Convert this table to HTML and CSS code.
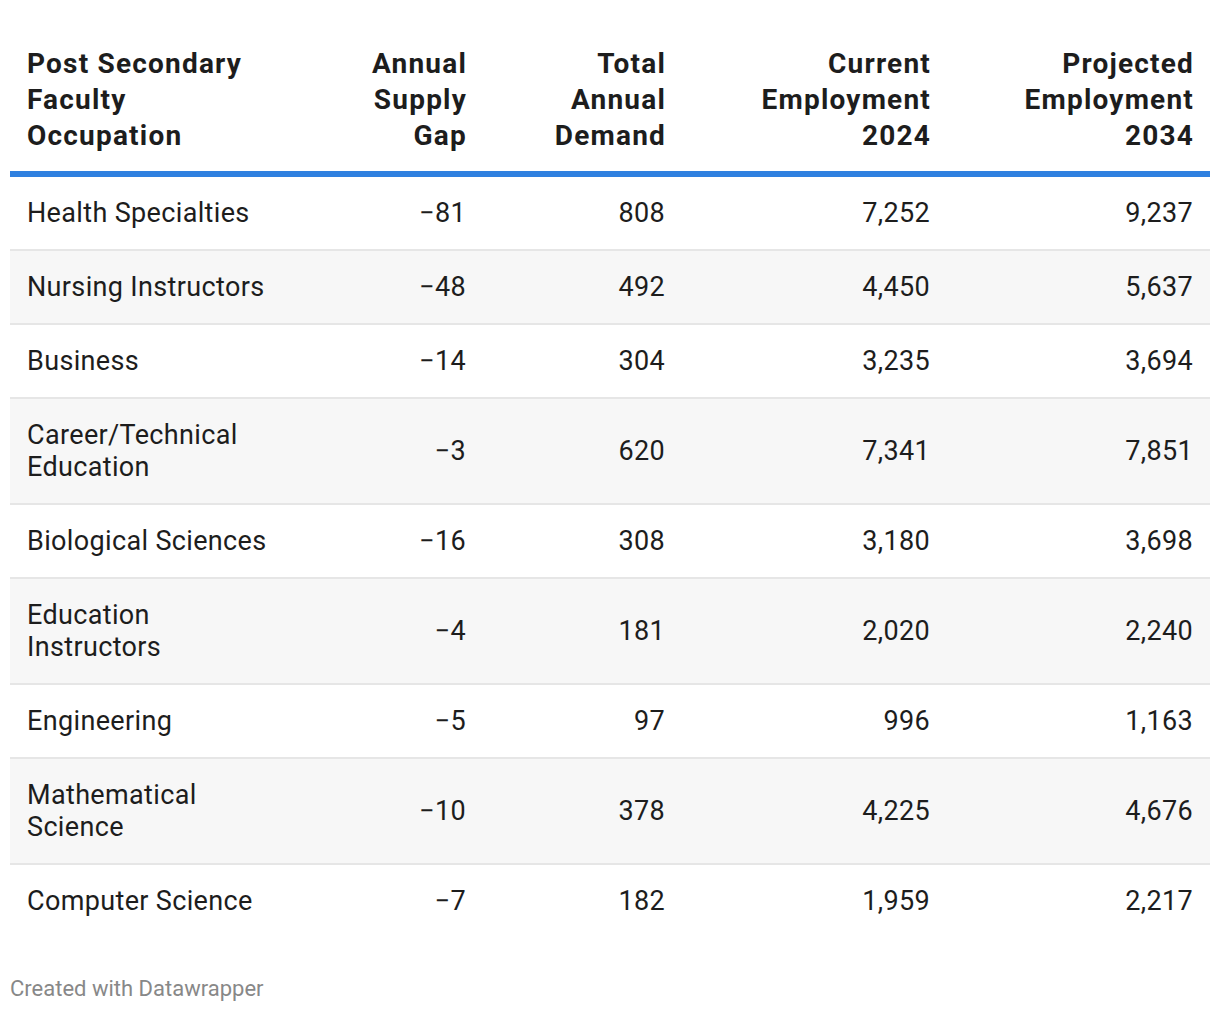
FILE: index.html
```html
<!DOCTYPE html>
<html>
<head>
<meta charset="utf-8">
<link rel="stylesheet" href="styles.css">
</head>
<body>
<div class="chart">
  <table class="dw-table">
    <colgroup>
      <col class="c1"><col class="c2"><col class="c3"><col class="c4"><col class="c5">
    </colgroup>
    <thead>
      <tr>
        <th class="left">Post Secondary Faculty Occupation</th>
        <th>Annual Supply Gap</th>
        <th>Total Annual Demand</th>
        <th>Current Employment 2024</th>
        <th>Projected Employment 2034</th>
      </tr>
    </thead>
    <tbody>
      <tr><td class="left">Health Specialties</td><td>−81</td><td>808</td><td>7,252</td><td>9,237</td></tr>
      <tr><td class="left">Nursing Instructors</td><td>−48</td><td>492</td><td>4,450</td><td>5,637</td></tr>
      <tr><td class="left">Business</td><td>−14</td><td>304</td><td>3,235</td><td>3,694</td></tr>
      <tr><td class="left">Career/Technical Education</td><td>−3</td><td>620</td><td>7,341</td><td>7,851</td></tr>
      <tr><td class="left">Biological Sciences</td><td>−16</td><td>308</td><td>3,180</td><td>3,698</td></tr>
      <tr><td class="left">Education Instructors</td><td>−4</td><td>181</td><td>2,020</td><td>2,240</td></tr>
      <tr><td class="left">Engineering</td><td>−5</td><td>97</td><td>996</td><td>1,163</td></tr>
      <tr><td class="left">Mathematical Science</td><td>−10</td><td>378</td><td>4,225</td><td>4,676</td></tr>
      <tr><td class="left">Computer Science</td><td>−7</td><td>182</td><td>1,959</td><td>2,217</td></tr>
    </tbody>
  </table>
  <div class="footer">Created with Datawrapper</div>
</div>
</body>
</html>
```
FILE: styles.css
```css
html, body {
  margin: 0;
  padding: 0;
  background: #ffffff;
}
.chart {
  padding: 10px;
  font-family: Roboto, "Liberation Sans", sans-serif;
  color: #1d1d1d;
}
.dw-table {
  width: 1200px;
  border-collapse: collapse;
  table-layout: fixed;
}
.c1 { width: 293px; }
.c2 { width: 180px; }
.c3 { width: 199px; }
.c4 { width: 265px; }
.c5 { width: 263px; }
.dw-table th {
  font-size: 28px;
  line-height: 36px;
  font-weight: 700;
  letter-spacing: 1.2px;
  text-align: right;
  vertical-align: bottom;
  padding: 36px 16px 17px 17px;
  border-bottom: 6px solid #2f80e0;
}
.dw-table th.left {
  padding-left: 17px;
  padding-right: 17px;
}
.dw-table td {
  font-size: 27px;
  line-height: 32px;
  font-weight: 400;
  letter-spacing: 0.35px;
  text-align: right;
  vertical-align: middle;
  padding: 20px 17px;
  border-bottom: 2px solid #e6e6e6;
}
.dw-table tbody tr:nth-child(even) td {
  background: #f7f7f7;
}
.dw-table tbody tr:last-child td {
  border-bottom: none;
}
.dw-table .left {
  text-align: left;
}
.footer {
  margin-top: 40px;
  font-size: 22px;
  line-height: 24px;
  color: #888888;
}
```
